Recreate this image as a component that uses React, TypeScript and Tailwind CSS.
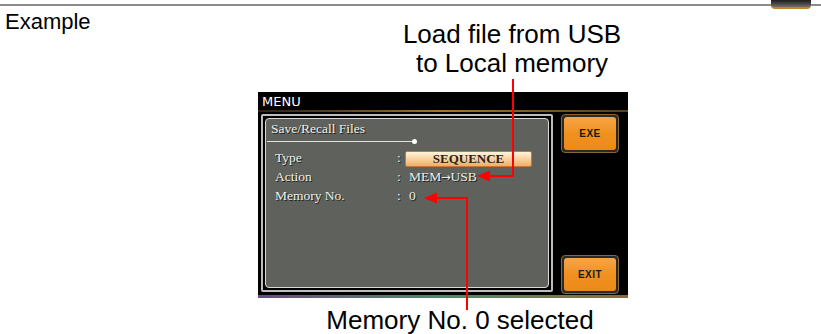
const serif = { fontFamily: '"Liberation Serif", "DejaVu Serif", serif' };

const Row = ({ label, children }: { label: string; children: React.ReactNode }) => (
  <div className="flex h-[19px] items-center">
    <span className="w-[131px] pl-[9px]">{label}</span>
    <span className="w-[8px]">:</span>
    {children}
  </div>
);

const SoftKey = ({ label }: { label: string }) => (
  <div className="rounded-[4px] border border-[#8a6630] bg-[#2a2a2a] p-[2px]">
    <div className="flex h-[33px] w-[52px] items-center justify-center rounded-[3px] bg-gradient-to-b from-[#f6a544] via-[#f0911f] to-[#ec8a18] font-['Liberation_Sans'] text-[10px] font-bold tracking-[0.5px] text-[#1a1a1a]">
      {label}
    </div>
  </div>
);

export default function App() {
  return (
    <div className="relative h-[334px] w-[821px] overflow-hidden bg-white font-['Liberation_Sans'] text-black">
      {/* header rule */}
      <div className="flex h-[9px] items-start">
        <div className="mt-[4px] h-[2px] flex-1 bg-[#8c8c8c]" />
        <div className="h-[9px] w-[40px] rounded-b-[4px] border-b-2 border-[#c9822c] bg-gradient-to-b from-[#1e1e1e] to-[#6e6e6e]" />
        <div className="mt-[4px] h-[2px] w-[10px] bg-[#8c8c8c]" />
      </div>

      <div className="flex">
        <div className="w-[258px] shrink-0 pl-[5px] text-[22px] leading-[25px]">Example</div>

        <div className="flex flex-col">
          <div className="ml-[84px] mt-[11px] w-[340px] text-center text-[26px] leading-[29px]">
            <div>Load file from USB</div>
            <div>to Local memory</div>
          </div>

          {/* instrument screen */}
          <div className="mt-[14px] h-[205px] w-[370px] bg-black" style={serif}>
            <div className="flex h-[18px] items-end pl-[4px] font-['DejaVu_Sans'] text-[13px] leading-[16px] text-white">
              MENU
            </div>
            <div className="h-[2px] bg-gradient-to-r from-[#2e2210] via-[#a8732c] to-[#5a4018]" />
            <div className="flex gap-[8px] pl-[3px] pt-[2px]">
              <div className="h-[178px] w-[292px] rounded-[2px] border-2 border-[#bdbdbd] bg-black p-[2px]">
                <div className="h-full rounded-[4px] border border-[#d8d8d8] bg-[#5e615c] text-[13.5px] text-[#eeeee6] [text-shadow:1px_1px_0_#1e1e1e]">
                  <div className="pl-[5px] pt-[1px] leading-[17px]">Save/Recall Files</div>
                  <div className="relative ml-[1px] mt-[4px] h-[1px] w-[148px] bg-[#e0e0e0]">
                    <div className="absolute -right-[2px] -top-[2px] h-[5px] w-[5px] rounded-full bg-white" />
                  </div>
                  <div className="mt-[7px] flex flex-col">
                    <Row label="Type">
                      <div className="flex h-[16px] w-[127px] items-center justify-center rounded-[2px] border border-[#c4783a] bg-gradient-to-b from-[#fff4dc] to-[#f2ad62] text-[13px] font-bold text-[#2a2218] [text-shadow:none]">
                        SEQUENCE
                      </div>
                    </Row>
                    <Row label="Action">
                      <span className="pl-[4px]">
                        MEM<span className="font-['DejaVu_Sans'] text-[11px]">→</span>USB
                      </span>
                    </Row>
                    <Row label="Memory No.">
                      <span className="pl-[4px]">0</span>
                    </Row>
                  </div>
                </div>
              </div>
              <div className="flex h-[180px] flex-col justify-between">
                <SoftKey label="EXE" />
                <SoftKey label="EXIT" />
              </div>
            </div>
            <div className="mt-[1px] h-[3px] bg-gradient-to-r from-[#6a4a7a] via-[#4a8a6a] to-[#8a6a3a]" />
          </div>

          <div className="ml-[67px] mt-[9px] w-[270px] whitespace-nowrap text-center text-[26px] leading-[29px]">
            Memory No. 0 selected
          </div>
        </div>
      </div>

      {/* callout arrows */}
      <svg className="pointer-events-none absolute left-0 top-0" width="821" height="334">
        <g stroke="#ff0000" strokeWidth="2" fill="none">
          <path d="M513 79 V176 H486" />
          <path d="M467 310 V198 H433" />
        </g>
        <g fill="#ff0000">
          <path d="M477 176 L490 170.5 L490 181.5 Z" />
          <path d="M424 198 L437 192.5 L437 203.5 Z" />
        </g>
      </svg>
    </div>
  );
}
